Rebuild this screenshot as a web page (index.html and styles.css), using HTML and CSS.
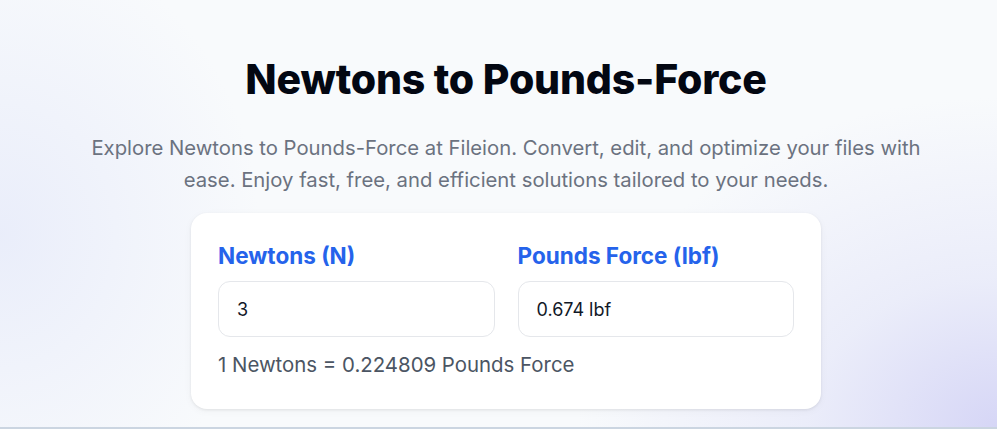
FILE: index.html
```html
<!DOCTYPE html>
<html lang="en">
<head>
<meta charset="utf-8">
<title>Newtons to Pounds-Force</title>
<link rel="stylesheet" href="styles.css">
</head>
<body>
<main class="hero">
  <div class="container">
    <h1 class="title">Newtons to Pounds-Force</h1>
    <p class="lead">Explore Newtons to Pounds-Force at Fileion. Convert, edit, and optimize your files with ease. Enjoy fast, free, and efficient solutions tailored to your needs.</p>
    <section class="card">
      <div class="fields">
        <div class="field">
          <label class="label" for="n">Newtons (N)</label>
          <input class="input" id="n" type="text" value="3">
        </div>
        <div class="field">
          <label class="label" for="lbf">Pounds Force (lbf)</label>
          <input class="input" id="lbf" type="text" value="0.674 lbf" readonly>
        </div>
      </div>
      <p class="ratio">1 Newtons = 0.224809 Pounds Force</p>
    </section>
  </div>
</main>
</body>
</html>
```

FILE: styles.css
```css
* { box-sizing: border-box; }
html, body { margin: 0; padding: 0; }
body {
  font-family: Inter, "Noto Sans", sans-serif;
  background: #f8fafc;
  height: 429px;
  overflow: hidden;
}
.hero {
  height: 429px;
  border-bottom: 2px solid #cbd5e1;
  background:
    radial-gradient(ellipse 420px 330px at 100% 100%, rgba(214, 214, 246, 1) 0%, rgba(226, 228, 248, 0.6) 45%, rgba(248, 250, 252, 0) 100%),
    radial-gradient(ellipse 260px 300px at 0% 55%, rgba(232, 236, 250, 0.9) 0%, rgba(248, 250, 252, 0) 100%),
    #f8fafc;
  padding-left: 15px;
}
.container {
  display: flex;
  flex-direction: column;
  align-items: center;
  padding-top: 52px;
}
.title {
  margin: 0;
  font-size: 41px;
  line-height: 54px;
  font-weight: 800;
  color: #030712;
  letter-spacing: -0.2px;
}
.lead {
  margin: 26px 0 0;
  width: 880px;
  text-align: center;
  font-size: 20.3px;
  line-height: 32px;
  color: #6b7280;
}
.card {
  margin-top: 17px;
  width: 630px;
  background: #fff;
  border-radius: 16px;
  box-shadow: 0 1px 3px rgba(0,0,0,0.08), 0 2px 8px rgba(0,0,0,0.04);
  padding: 28px 27px 30px;
}
.fields {
  display: grid;
  grid-template-columns: minmax(0, 1fr) minmax(0, 1fr);
  gap: 23px;
}
.field { display: flex; flex-direction: column; min-width: 0; }
.label {
  font-size: 22.5px;
  line-height: 30px;
  font-weight: 700;
  color: #2563eb;
  margin-bottom: 10px;
}
.input {
  width: 100%;
  min-width: 0;
  height: 56px;
  border: 1px solid #e5e7eb;
  border-radius: 12px;
  padding: 0 18px;
  font-family: inherit;
  font-size: 18px;
  color: #111827;
  background: #fff;
  outline: none;
}
.ratio {
  margin: 14px 0 0;
  font-size: 20.4px;
  line-height: 28px;
  color: #4b5563;
}
```
